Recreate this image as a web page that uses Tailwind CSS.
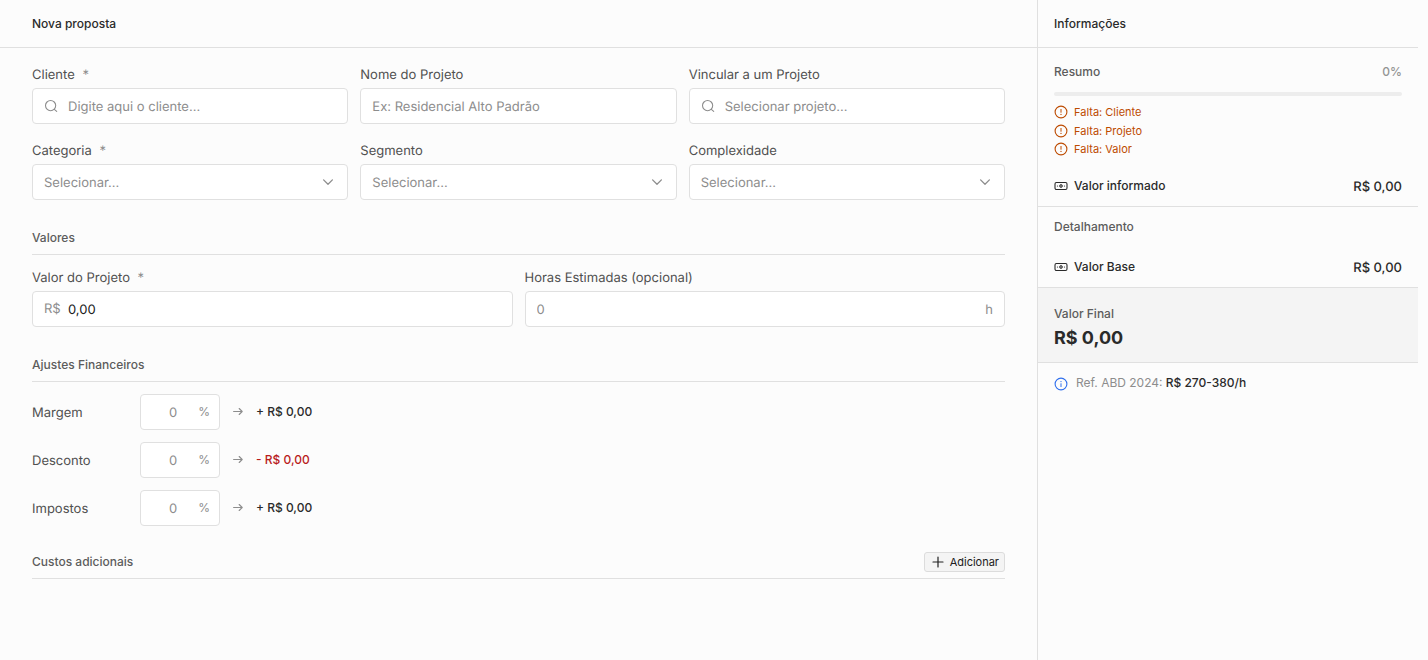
<!DOCTYPE html>
<html lang="pt-BR">
<head>
    <meta charset="UTF-8">
    <meta name="viewport" content="width=device-width, initial-scale=1.0">
    <title>Nova proposta</title>
    <script src="https://cdn.jsdelivr.net/npm/@tailwindcss/browser@4"></script>
</head>
<body class="bg-[#fcfcfc] font-['Inter',sans-serif] text-[#2a2a2a]">
    <svg class="hidden" aria-hidden="true">
        <symbol id="icon-search" viewBox="0 0 14 14"><path fill="none" stroke="currentColor" stroke-width="1.1" stroke-linecap="round" d="M11.7 6.6a5.1 5.1 0 1 1-10.2 0 5.1 5.1 0 0 1 10.2 0ZM10.3 10.3l2.4 2.1"/></symbol>
        <symbol id="icon-chevron" viewBox="0 0 14 14"><path fill="none" stroke="currentColor" stroke-width="1.3" stroke-linecap="round" stroke-linejoin="round" d="M2.6 4.9L7 9.2l4.4-4.3"/></symbol>
        <symbol id="icon-arrow" viewBox="0 0 12 12"><path fill="none" stroke="currentColor" stroke-width="1.1" stroke-linecap="round" stroke-linejoin="round" d="M1.6 5.5h8.6M7.2 2.5l3 3-3 3"/></symbol>
        <symbol id="icon-plus" viewBox="0 0 12 12"><path fill="none" stroke="currentColor" stroke-width="1.2" stroke-linecap="round" d="M6 1v10M1 6h10"/></symbol>
        <symbol id="icon-warning" viewBox="0 0 14 14"><circle cx="7" cy="7" r="5.9" fill="none" stroke="currentColor" stroke-width="1.1"/><path fill="none" stroke="currentColor" stroke-width="1" stroke-linecap="round" d="M7 4.4v2.9"/><circle cx="7" cy="9.4" r=".65" fill="currentColor"/></symbol>
        <symbol id="icon-info" viewBox="0 0 14 14"><circle cx="7" cy="7" r="5.9" fill="none" stroke="currentColor" stroke-width="1.1"/><path fill="none" stroke="currentColor" stroke-width="1" stroke-linecap="round" d="M7 6.7v2.9"/><circle cx="7" cy="4.6" r=".65" fill="currentColor"/></symbol>
        <symbol id="icon-money" viewBox="0 0 14 14"><rect x="1" y="3.5" width="12" height="7" rx="1.4" fill="none" stroke="currentColor" stroke-width="1.1"/><circle cx="7" cy="7" r="1.4" fill="currentColor" fill-opacity=".5" stroke="currentColor" stroke-width=".8"/><circle cx="3.5" cy="7" r=".6" fill="currentColor"/><circle cx="10.5" cy="7" r=".6" fill="currentColor"/></symbol>
    </svg>

    <div class="flex min-h-screen">
        <main class="flex-1 min-w-0">
            <header class="flex items-center border-b border-[#e0e0e0] px-8 h-12">
                <h1 class="font-medium text-xs">Nova proposta</h1>
            </header>

            <form class="px-8 pt-4">
                <div class="grid grid-cols-3 gap-x-3 gap-y-4 text-[13px] leading-[18px] [text-rendering:geometricPrecision]">
                    <div class="flex flex-col gap-1">
                        <label for="cliente" class="pt-0.5 text-[#505050]">Cliente <span class="ml-1 text-[#8d8d8d]">*</span></label>
                        <div class="relative">
                            <svg class="top-[11px] left-3 absolute size-3.5 text-[#8d8d8d]"><use href="#icon-search"/></svg>
                            <input id="cliente" type="text" placeholder="Digite aqui o cliente..." class="bg-white pt-0.5 pr-3 pl-[35px] border border-[#e0e0e0] rounded w-full h-9 placeholder:text-[#8d8d8d] [text-rendering:geometricPrecision]">
                        </div>
                    </div>
                    <div class="flex flex-col gap-1">
                        <label for="nome" class="pt-0.5 text-[#505050]">Nome do Projeto</label>
                        <input id="nome" type="text" placeholder="Ex: Residencial Alto Padrão" class="bg-white px-[11px] pt-0.5 border border-[#e0e0e0] rounded w-full h-9 placeholder:text-[#8d8d8d] [text-rendering:geometricPrecision]">
                    </div>
                    <div class="flex flex-col gap-1">
                        <label for="vincular" class="pt-0.5 text-[#505050]">Vincular a um Projeto</label>
                        <div class="relative">
                            <svg class="top-[11px] left-3 absolute size-3.5 text-[#8d8d8d]"><use href="#icon-search"/></svg>
                            <input id="vincular" type="text" placeholder="Selecionar projeto..." class="bg-white pt-0.5 pr-3 pl-[35px] border border-[#e0e0e0] rounded w-full h-9 placeholder:text-[#8d8d8d] [text-rendering:geometricPrecision]">
                        </div>
                    </div>
                    <div class="flex flex-col gap-1">
                        <label for="categoria" class="pt-0.5 text-[#505050]">Categoria <span class="ml-1 text-[#8d8d8d]">*</span></label>
                        <div class="relative">
                            <select id="categoria" class="bg-white px-[11px] pt-0.5 border border-[#e0e0e0] rounded w-full h-9 text-[#8d8d8d] appearance-none [text-rendering:geometricPrecision]">
                                <option>Selecionar...</option>
                            </select>
                            <svg class="top-[11px] right-[13px] absolute size-3.5 text-[#8d8d8d] pointer-events-none"><use href="#icon-chevron"/></svg>
                        </div>
                    </div>
                    <div class="flex flex-col gap-1">
                        <label for="segmento" class="pt-0.5 text-[#505050]">Segmento</label>
                        <div class="relative">
                            <select id="segmento" class="bg-white px-[11px] pt-0.5 border border-[#e0e0e0] rounded w-full h-9 text-[#8d8d8d] appearance-none [text-rendering:geometricPrecision]">
                                <option>Selecionar...</option>
                            </select>
                            <svg class="top-[11px] right-[13px] absolute size-3.5 text-[#8d8d8d] pointer-events-none"><use href="#icon-chevron"/></svg>
                        </div>
                    </div>
                    <div class="flex flex-col gap-1">
                        <label for="complexidade" class="pt-0.5 text-[#505050]">Complexidade</label>
                        <div class="relative">
                            <select id="complexidade" class="bg-white px-[11px] pt-0.5 border border-[#e0e0e0] rounded w-full h-9 text-[#8d8d8d] appearance-none [text-rendering:geometricPrecision]">
                                <option>Selecionar...</option>
                            </select>
                            <svg class="top-[11px] right-[13px] absolute size-3.5 text-[#8d8d8d] pointer-events-none"><use href="#icon-chevron"/></svg>
                        </div>
                    </div>
                </div>

                <h2 class="mt-[29px] pb-[7px] border-b border-[#e0e0e0] font-medium text-[#5c5c5c] text-xs leading-[18px]">Valores</h2>
                <div class="grid grid-cols-2 gap-x-3 mt-3 text-[13px] leading-[18px] [text-rendering:geometricPrecision]">
                    <div class="flex flex-col gap-1">
                        <label for="valor" class="pt-0.5 text-[#505050]">Valor do Projeto <span class="ml-1 text-[#8d8d8d]">*</span></label>
                        <div class="relative">
                            <span class="top-[9px] left-3 absolute text-[#8d8d8d]">R$</span>
                            <input id="valor" type="text" value="0,00" class="bg-white pt-0.5 pr-3 pl-[35px] border border-[#e0e0e0] rounded w-full h-9 text-[#202020] [text-rendering:geometricPrecision]">
                        </div>
                    </div>
                    <div class="flex flex-col gap-1">
                        <label for="horas" class="pt-0.5 text-[#505050]">Horas Estimadas (opcional)</label>
                        <div class="relative">
                            <input id="horas" type="text" placeholder="0" class="bg-white pt-0.5 pr-8 pl-[11px] border border-[#e0e0e0] rounded w-full h-9 placeholder:text-[#8d8d8d] [text-rendering:geometricPrecision]">
                            <span class="top-2.5 right-3 absolute text-[#8d8d8d]">h</span>
                        </div>
                    </div>
                </div>

                <h2 class="mt-[29px] pb-[7px] border-b border-[#e0e0e0] font-medium text-[#5c5c5c] text-xs leading-[18px]">Ajustes Financeiros</h2>
                <div class="flex flex-col gap-3 mt-3 text-[13px] leading-[18px]">
                    <div class="flex items-center gap-3">
                        <label for="margem" class="pt-0.5 w-24 text-[#505050] [text-rendering:geometricPrecision]">Margem</label>
                        <div class="relative">
                            <input id="margem" type="text" placeholder="0" class="bg-white pt-0.5 pr-[25px] pl-[11px] border border-[#e0e0e0] rounded w-20 h-9 text-center placeholder:text-[#8d8d8d] [text-rendering:geometricPrecision]">
                            <span class="top-2.5 right-2.5 absolute text-[#8d8d8d] text-xs">%</span>
                        </div>
                        <svg class="size-3 text-[#8d8d8d]"><use href="#icon-arrow"/></svg>
                        <span class="font-medium text-xs">+ R$ 0,00</span>
                    </div>
                    <div class="flex items-center gap-3">
                        <label for="desconto" class="pt-0.5 w-24 text-[#505050] [text-rendering:geometricPrecision]">Desconto</label>
                        <div class="relative">
                            <input id="desconto" type="text" placeholder="0" class="bg-white pt-0.5 pr-[25px] pl-[11px] border border-[#e0e0e0] rounded w-20 h-9 text-center placeholder:text-[#8d8d8d] [text-rendering:geometricPrecision]">
                            <span class="top-2.5 right-2.5 absolute text-[#8d8d8d] text-xs">%</span>
                        </div>
                        <svg class="size-3 text-[#8d8d8d]"><use href="#icon-arrow"/></svg>
                        <span class="font-medium text-[#b91c1c] text-xs">- R$ 0,00</span>
                    </div>
                    <div class="flex items-center gap-3">
                        <label for="impostos" class="pt-0.5 w-24 text-[#505050] [text-rendering:geometricPrecision]">Impostos</label>
                        <div class="relative">
                            <input id="impostos" type="text" placeholder="0" class="bg-white pt-0.5 pr-[25px] pl-[11px] border border-[#e0e0e0] rounded w-20 h-9 text-center placeholder:text-[#8d8d8d] [text-rendering:geometricPrecision]">
                            <span class="top-2.5 right-2.5 absolute text-[#8d8d8d] text-xs">%</span>
                        </div>
                        <svg class="size-3 text-[#8d8d8d]"><use href="#icon-arrow"/></svg>
                        <span class="font-medium text-xs">+ R$ 0,00</span>
                    </div>
                </div>

                <div class="flex justify-between items-center mt-[26px] pb-1.5 border-b border-[#e0e0e0]">
                    <h2 class="font-medium text-[#5c5c5c] text-xs">Custos adicionais</h2>
                    <button type="button" class="flex items-center gap-1.5 bg-[#f4f4f4] pr-[5px] pl-[7px] border border-[#dcdcdc] rounded-[3px] h-5 text-[#202020] text-[11px]">
                        <svg class="size-3"><use href="#icon-plus"/></svg>
                        Adicionar
                    </button>
                </div>
            </form>
        </main>

        <aside class="mr-2.5 border-[#e0e0e0] border-l w-[381px] text-xs shrink-0">
            <header class="flex items-center border-b border-[#e0e0e0] px-4 h-12">
                <h2 class="font-medium">Informações</h2>
            </header>

            <section class="px-4 pt-4 pb-2.5 border-b border-[#e0e0e0]">
                <div class="flex justify-between font-medium">
                    <h3 class="text-[#5c5c5c]">Resumo</h3>
                    <span class="text-[#949494]">0%</span>
                </div>
                <div class="bg-[#ededed] mt-3 rounded-full h-1" role="progressbar" aria-label="Resumo" aria-valuenow="0"></div>
                <ul class="flex flex-col gap-0.5 mt-2 text-[#bd4b00] text-[11px] leading-normal">
                    <li class="flex items-center gap-1.5"><svg class="size-3.5"><use href="#icon-warning"/></svg>Falta: Cliente</li>
                    <li class="flex items-center gap-1.5"><svg class="size-3.5"><use href="#icon-warning"/></svg>Falta: Projeto</li>
                    <li class="flex items-center gap-1.5"><svg class="size-3.5"><use href="#icon-warning"/></svg>Falta: Valor</li>
                </ul>
                <div class="flex justify-between items-center mt-[18px] font-medium">
                    <span class="flex items-center gap-1.5"><svg class="size-3.5"><use href="#icon-money"/></svg>Valor informado</span>
                    <span class="pt-0.5 text-[13px] leading-[18px] [text-rendering:geometricPrecision]">R$ 0,00</span>
                </div>
            </section>

            <section class="px-4 pt-3 pb-2.5 border-b border-[#e0e0e0]">
                <h3 class="font-medium text-[#5c5c5c]">Detalhamento</h3>
                <div class="flex justify-between items-center mt-[22px] font-medium">
                    <span class="flex items-center gap-1.5"><svg class="size-3.5"><use href="#icon-money"/></svg>Valor Base</span>
                    <span class="pt-0.5 text-[13px] leading-[18px] [text-rendering:geometricPrecision]">R$ 0,00</span>
                </div>
            </section>

            <section class="bg-[#f4f4f4] px-4 pt-4 pb-2.5 border-b border-[#e0e0e0]">
                <h3 class="font-medium text-[#5c5c5c] leading-5">Valor Final</h3>
                <p class="font-bold text-lg leading-7">R$ 0,00</p>
            </section>

            <div class="flex items-center gap-2 px-4 py-3">
                <svg class="size-3.5 text-[#2f6fed]"><use href="#icon-info"/></svg>
                <p class="pb-0.5 font-medium leading-4"><span class="font-normal text-[#8d8d8d]">Ref. ABD 2024:</span> R$ 270-380/h</p>
            </div>
        </aside>
    </div>
</body>
</html>
